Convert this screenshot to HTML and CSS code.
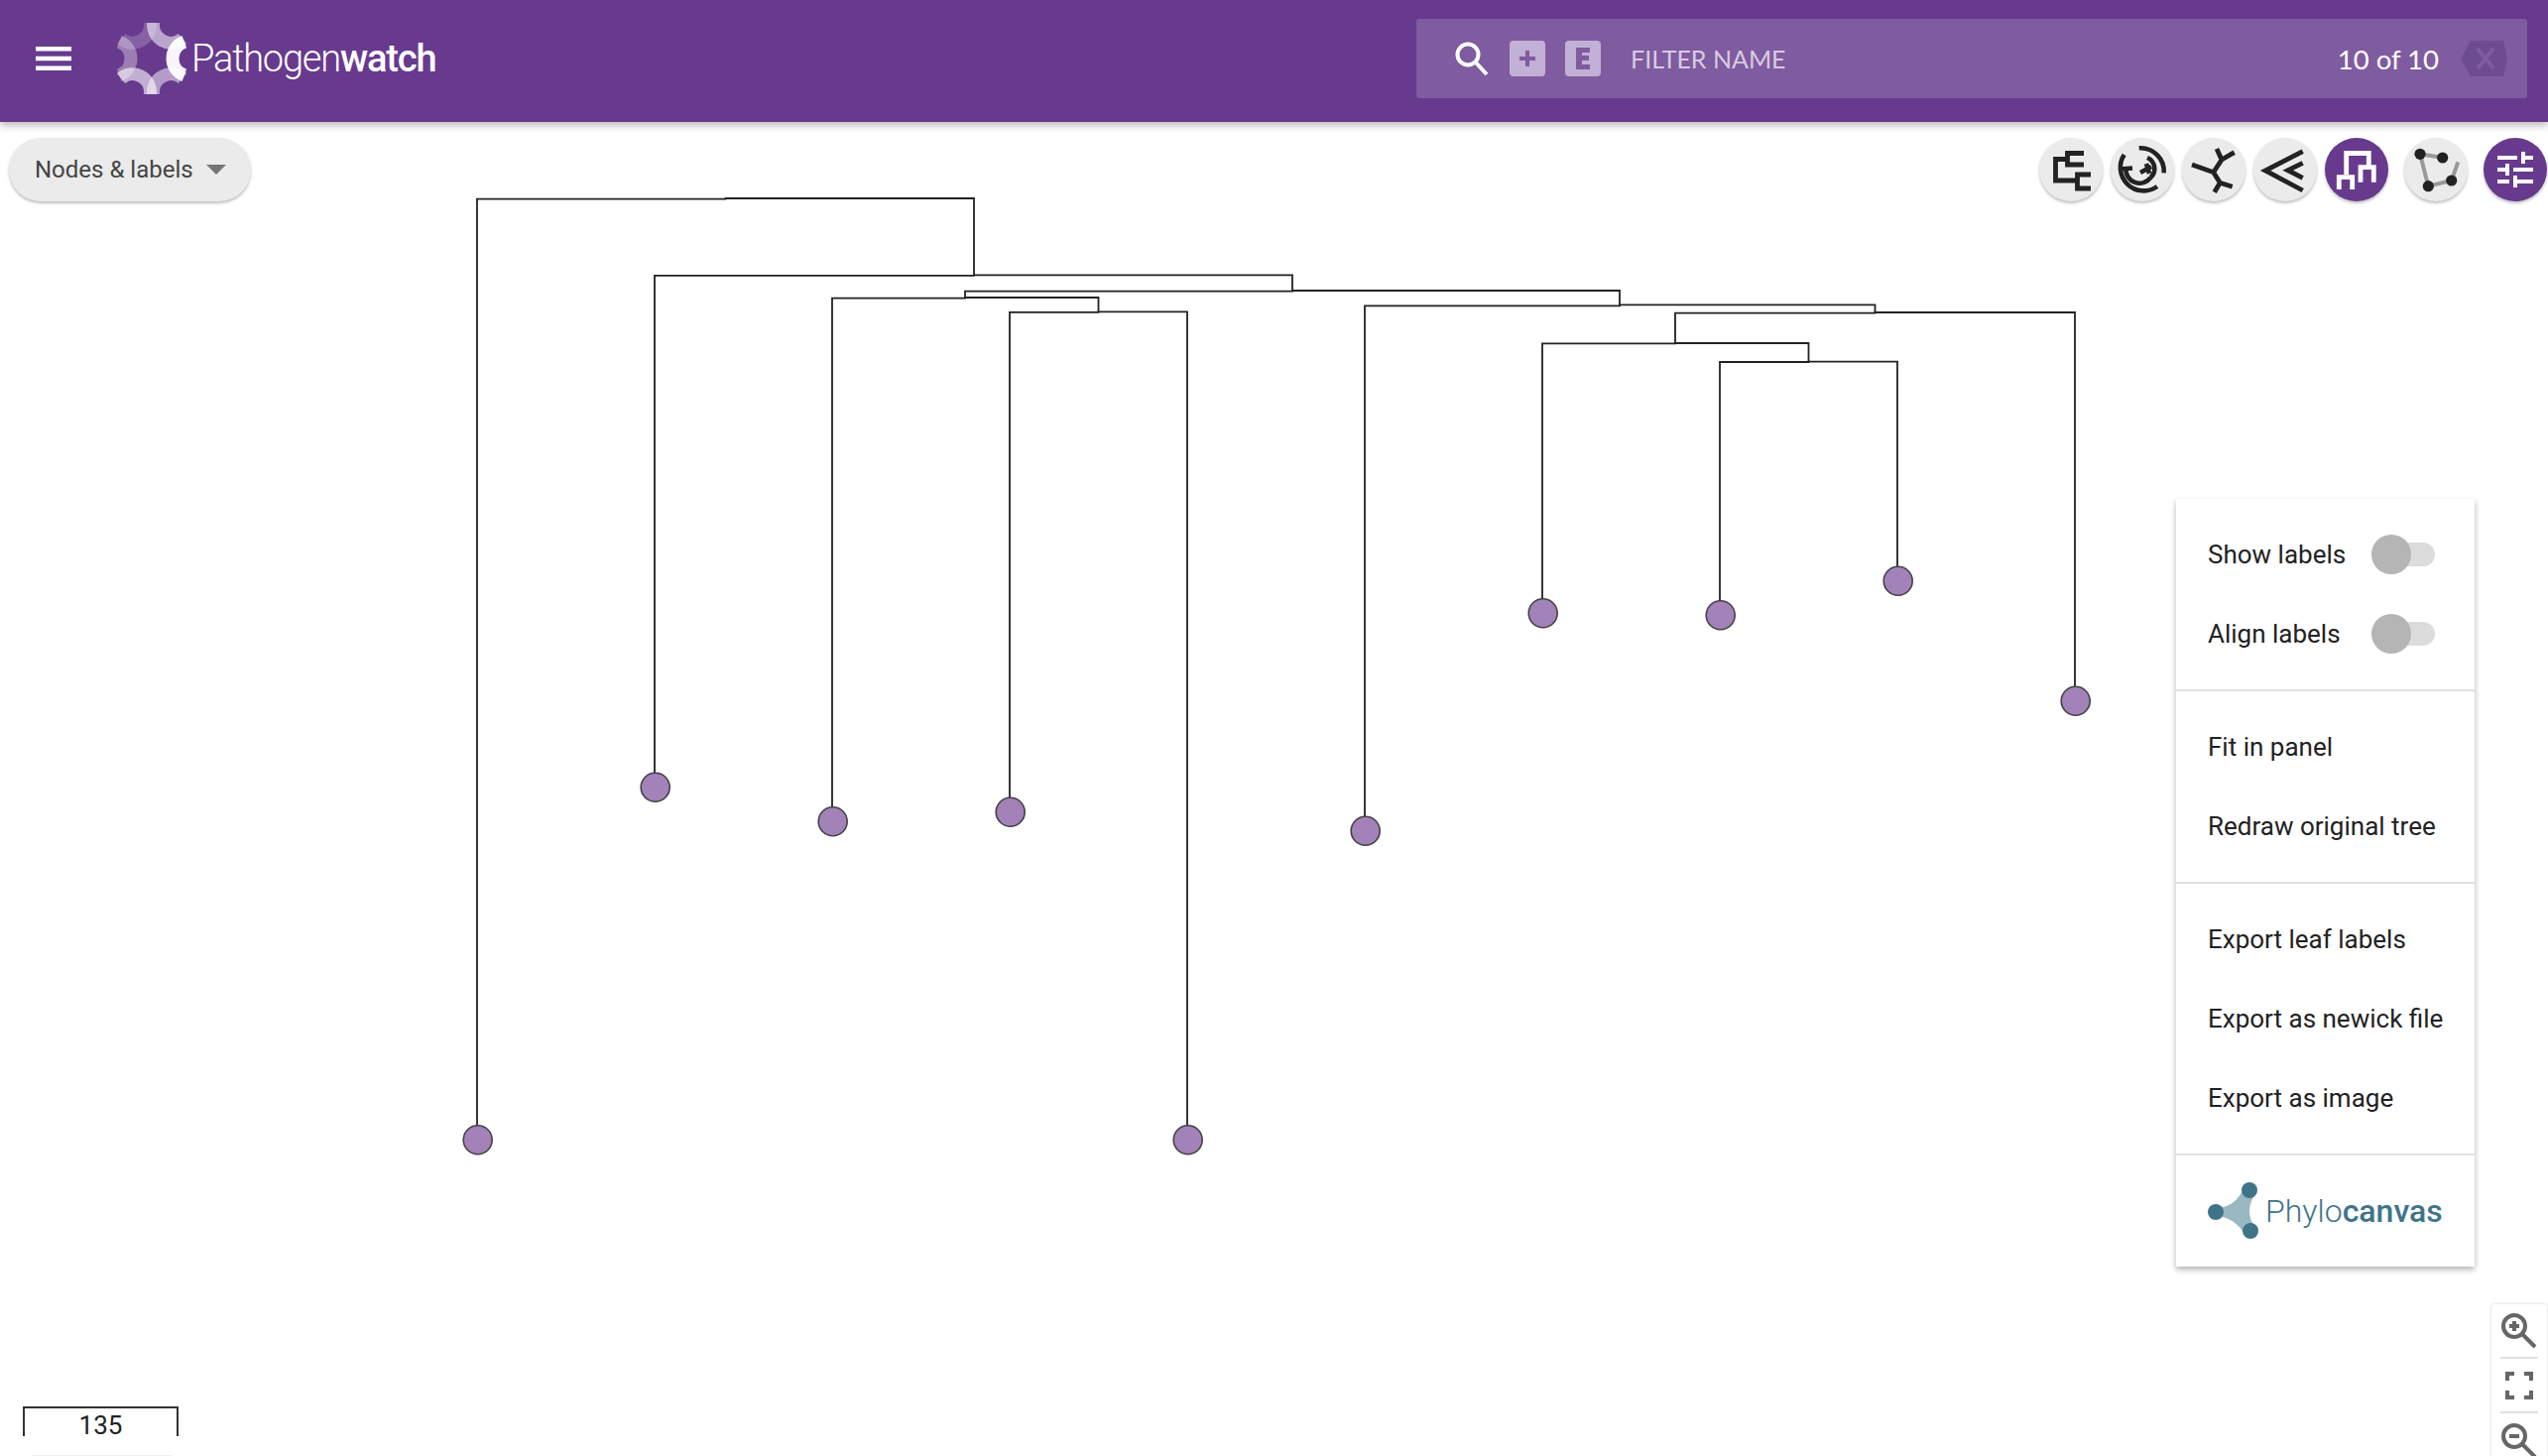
FILE: index.html
```html
<!DOCTYPE html>
<html lang="en">
<head>
  <meta charset="UTF-8">
  <title>Pathogenwatch</title>
  <link rel="stylesheet" href="styles.css">
</head>
<body>

  <header class="topbar">
    <button class="menu-btn" aria-label="Menu">
      <svg width="36" height="24" viewBox="0 0 36 24"><path d="M0 0h36v4.500H0zM0 9.700h36v4.500H0zM0 19.400h36v4.500H0z"/></svg>
    </button>
    <a class="brand">
      <svg class="brand-mark" width="70" height="72" viewBox="-35 -36 70 72">
        <path d="M32.8 -16.9A18 18 0 0 0 32.8 16.9" opacity="0.95"/>
        <path d="M32.8 -16.9A18 18 0 0 0 32.8 16.9" transform="rotate(60)" opacity="0.5"/>
        <path d="M32.8 -16.9A18 18 0 0 0 32.8 16.9" transform="rotate(120)" opacity="0.6"/>
        <path d="M32.8 -16.9A18 18 0 0 0 32.8 16.9" transform="rotate(180)" opacity="0.35"/>
        <path d="M32.8 -16.9A18 18 0 0 0 32.8 16.9" transform="rotate(240)" opacity="0.2"/>
        <path d="M32.8 -16.9A18 18 0 0 0 32.8 16.9" transform="rotate(300)" opacity="0.55"/>
      </svg>
      <span class="brand-name">Pathogen<b>watch</b></span>
    </a>
    <div class="filter">
      <svg class="filter-search" width="36" height="36" viewBox="0 0 36 36"><circle cx="14" cy="14" r="10.500"/><path d="M21.500 21.500L33 34"/></svg>
      <span class="key">
        <svg width="20" height="20" viewBox="0 0 20 20"><path d="M8 2h4v6h6v4h-6v6H8v-6H2V8h6z"/></svg>
      </span>
      <span class="key">
        <svg width="20" height="24" viewBox="0 0 20 24"><path d="M3 1h14v5H9v3h7v5H9v4h8v5H3z"/></svg>
      </span>
      <span class="filter-label">FILTER NAME</span>
      <span class="filter-count">10 of 10</span>
      <span class="filter-clear">
        <svg width="47" height="36" viewBox="0 0 47 36"><path class="hex" d="M10 0H43L47 18 43 36H10L0 18z"/><path class="cross" d="M17 8L33 28M33 8L17 28"/></svg>
      </span>
    </div>
  </header>

  <main class="stage">
    <svg class="tree" width="2569" height="1345" viewBox="0 123 2569 1345">
      <g class="branches">
        <path d="M481 1148V200.700H731.500V200H982V277.700"/>
        <path d="M660 793V277.800H982V277.300H1303V293.300"/>
        <path d="M973 300V293.700H1303V293H1633V308"/>
        <path d="M839 827V300.700H973V300H1107.500V314.700"/>
        <path d="M1018 818V314.800H1107.500V314.300H1197V1148"/>
        <path d="M1376 837V308.300H1633V307.400H1890.500V315.700"/>
        <path d="M1689 346V315.700H1890.500V315H2092V706"/>
        <path d="M1555 618V346.300H1689V346H1823.500V365"/>
        <path d="M1734 619V365H1823.500V364.700H1913V585"/>
      </g>
      <g class="leaves" transform="translate(0.7 0.8)">
        <circle cx="481" cy="1148.500" r="14.500"/>
        <circle cx="660" cy="793" r="14.500"/>
        <circle cx="839" cy="827.500" r="14.500"/>
        <circle cx="1018" cy="818" r="14.500"/>
        <circle cx="1197" cy="1148.500" r="14.500"/>
        <circle cx="1376" cy="837" r="14.500"/>
        <circle cx="1555" cy="617.500" r="14.500"/>
        <circle cx="1734" cy="619.500" r="14.500"/>
        <circle cx="1913" cy="585" r="14.500"/>
        <circle cx="2092" cy="706" r="14.500"/>
      </g>
    </svg>

    <button class="chip">Nodes &amp; labels <i class="caret"></i></button>

    <div class="tools">
      <button class="tool">
        <svg viewBox="0 0 64 64"><path d="M45 15.500H28.500V27H45M28.500 21.500H16.500V43H38.500M52 37H38.500V51H52"/></svg>
      </button>
      <button class="tool">
        <svg viewBox="0 0 64 64" class="radial"><path d="M28.700 10.300A23.500 23.500 0 0 1 53.700 35.300M13.700 17A23.500 23.500 0 0 0 47 49M15.500 31A13.700 13.700 0 0 0 40.300 40M37 20A12 12 0 0 1 40.300 40M10 31.500L22 30.500M30 35L41 29M36 26L39 36"/></svg>
      </button>
      <button class="tool">
        <svg viewBox="0 0 64 64"><path d="M10 27L31.700 34.700L40 22L35 11M40 22L52.700 14.700M31.700 34.700L38.300 45.300L32.700 54.700M38.300 45.300L50.700 49.300"/></svg>
      </button>
      <button class="tool">
        <svg viewBox="0 0 64 64"><path d="M49.700 13.700L12 33L49.700 53M49.700 25.300L34.700 32.700L49.700 40.300"/></svg>
      </button>
      <button class="tool is-on">
        <svg viewBox="0 0 64 64"><path d="M21.700 37V15.500H44.300V29.700M14.300 52V39.700H27.700V52M36 44.700V29.700H49.300V44.700"/></svg>
      </button>
      <button class="tool tool-gap">
        <svg viewBox="0 0 64 64"><path class="edge" d="M16 16.300L38.700 20M16 16.300L24.300 48.700L47.700 43L54.300 24.300"/><circle cx="16" cy="16.300" r="5.600"/><circle cx="38.700" cy="20" r="5.600"/><circle cx="24.300" cy="48.700" r="5.600"/><circle cx="47.700" cy="43" r="5.600"/></svg>
      </button>
      <button class="tool is-on tool-gap">
        <svg viewBox="0 0 24 24" class="tune"><path d="M3 17v2h6v-2H3zM3 5v2h10V5H3zm10 16v-2h8v-2h-8v-2h-2v6h2zM7 9v2H3v2h4v2h2V9H7zm14 4v-2H11v2h10zm-6-4h2V7h4V5h-4V3h-2v6z"/></svg>
      </button>
    </div>

    <aside class="panel">
      <section class="panel-group">
        <div class="panel-row">Show labels <span class="toggle"></span></div>
        <div class="panel-row">Align labels <span class="toggle"></span></div>
      </section>
      <section class="panel-group">
        <div class="panel-row">Fit in panel</div>
        <div class="panel-row">Redraw original tree</div>
      </section>
      <section class="panel-group">
        <div class="panel-row">Export leaf labels</div>
        <div class="panel-row">Export as newick file</div>
        <div class="panel-row">Export as image</div>
      </section>
      <div class="panel-logo">
        <svg width="56" height="58" viewBox="0 0 56 58">
          <path class="logo-arm" d="M8 26C20 26 30 20 36 6L48 12C40 22 40 38 49 46L38 54C32 42 20 34 8 34z"/>
          <circle cx="8" cy="30" r="8"/><circle cx="42" cy="8" r="8"/><circle cx="43" cy="49" r="8"/>
        </svg>
        <span class="logo-name">Phylo<b>canvas</b></span>
      </div>
    </aside>

    <div class="zoom">
      <button class="zoom-btn">
        <svg width="40" height="40" viewBox="0 0 40 40"><circle cx="15" cy="15" r="11"/><path d="M23 23L36 36M10 15H20M15 10V20"/></svg>
      </button>
      <button class="zoom-btn">
        <svg width="30" height="30" viewBox="0 0 30 30" class="full"><path d="M1 10V1H10V5H5V10zM20 1H29V10H25V5H20zM1 20H5V25H10V29H1zM25 20H29V29H20V25H25z"/></svg>
      </button>
      <button class="zoom-btn">
        <svg width="40" height="40" viewBox="0 0 40 40"><circle cx="15" cy="15" r="11"/><path d="M23 23L36 36M10 15H20"/></svg>
      </button>
    </div>

    <div class="scale"><span>135</span></div>
  </main>

</body>
</html>
```

FILE: styles.css
```css
* {
  box-sizing: border-box;
}

html, body {
  margin: 0;
  height: 100%;
  overflow: hidden;
}

body {
  font-family: "Roboto", sans-serif;
  background: #fff;
  color: #222;
}

button {
  font: inherit;
  border: none;
  padding: 0;
  background: none;
}

/* top bar */
.topbar {
  position: relative;
  z-index: 2;
  display: flex;
  align-items: center;
  height: 123px;
  padding-bottom: 5px;
  background: #673a8e;
  box-shadow: 0 3px 8px rgba(0, 0, 0, 0.3);
}

.menu-btn {
  display: flex;
  margin-left: 36px;
  fill: #fff;
}

.brand {
  display: flex;
  align-items: center;
  gap: 5px;
  margin-left: 46px;
  color: #fff;
}

.brand-mark {
  fill: none;
  stroke: #fff;
  stroke-width: 13;
}

.brand-name {
  font-size: 38px;
  font-weight: 300;
  letter-spacing: -1.2px;
}

.brand-name b {
  font-weight: 500;
}

.filter {
  display: flex;
  align-items: center;
  width: 1120px;
  height: 80px;
  margin-left: auto;
  margin-right: 21px;
  padding: 0 20px 0 38px;
  background: #7f5ba0;
  border-radius: 3px;
  color: #fff;
}

.filter-search {
  fill: none;
  stroke: #fff;
  stroke-width: 4;
}

.key {
  display: flex;
  align-items: center;
  justify-content: center;
  width: 36px;
  height: 36px;
  margin-left: 20px;
  background: #c2b0d6;
  border-radius: 4px;
  fill: #7f5ba0;
}

.filter-label {
  margin-left: 30px;
  font-family: "Lato", sans-serif;
  font-size: 25px;
  color: rgba(255, 255, 255, 0.7);
}

.filter-count {
  margin-left: auto;
  font-family: "Lato", sans-serif;
  font-size: 27.5px;
}

.filter-clear {
  display: flex;
  margin-left: 22px;
}

.filter-clear .hex {
  fill: #6e4c92;
}

.filter-clear .cross {
  fill: none;
  stroke: #7f5ba0;
  stroke-width: 4;
}

/* tree canvas */
.stage {
  position: relative;
  height: 1345px;
  overflow: hidden;
}

.tree {
  position: absolute;
  inset: 0;
}

.branches path {
  fill: none;
  stroke: #222;
  stroke-width: 1.8;
}

.leaves circle {
  fill: #a381b9;
  stroke: #444;
  stroke-width: 1.6;
}

.chip {
  position: absolute;
  top: 16px;
  left: 9px;
  display: flex;
  align-items: center;
  gap: 13px;
  height: 64px;
  padding: 0 25px 0 26px;
  border-radius: 32px;
  background: #ebebeb;
  box-shadow: 0 2px 3px rgba(0, 0, 0, 0.25);
  color: #444;
  font-size: 24px;
}

.caret {
  width: 0;
  height: 0;
  border-left: 10px solid transparent;
  border-right: 10px solid transparent;
  border-top: 10px solid #757575;
}

.tools {
  position: absolute;
  top: 16px;
  right: 1px;
  display: flex;
  gap: 8px;
}

.tool {
  width: 64px;
  height: 64px;
  border-radius: 50%;
  background: #ebebeb;
  box-shadow: 0 2px 3px rgba(0, 0, 0, 0.25);
}

.tool-gap {
  margin-left: 8px;
}

.tool svg {
  display: block;
  fill: none;
  stroke: #222;
  stroke-width: 4.8;
}

.tool .radial {
  stroke-width: 4.6;
}

.tool .edge {
  stroke: #999;
  stroke-width: 4;
}

.tool circle {
  fill: #222;
  stroke: none;
}

.tool.is-on {
  background: #673a8e;
}

.tool.is-on svg {
  stroke: #fff;
}

.tool.is-on .tune {
  width: 48px;
  height: 48px;
  margin: 8px;
  fill: #fff;
  stroke: none;
}

/* side panel */
.panel {
  position: absolute;
  top: 380px;
  left: 2194px;
  width: 301px;
  background: #fff;
  box-shadow: 0 3px 6px rgba(0, 0, 0, 0.3);
}

.panel-group {
  padding: 16px 0;
  border-bottom: 2px solid #e0e0e0;
}

.panel-row {
  display: flex;
  align-items: center;
  justify-content: space-between;
  height: 80px;
  padding: 0 40px 0 32px;
  font-size: 26px;
  color: #222;
  white-space: nowrap;
}

.toggle {
  position: relative;
  display: block;
  width: 64px;
  height: 24px;
  border-radius: 12px;
  background: #dcdcdc;
}

.toggle::before {
  content: '';
  position: absolute;
  top: -8px;
  left: 0;
  width: 40px;
  height: 40px;
  border-radius: 50%;
  background: #b5b5b5;
}

.panel-logo {
  display: flex;
  align-items: center;
  height: 112px;
  padding-left: 32px;
  gap: 2px;
  color: #3f7488;
}

.panel-logo svg {
  fill: #3f7488;
}

.logo-arm {
  fill: #9ab8c1;
}

.logo-name {
  font-size: 32px;
  font-weight: 300;
}

.logo-name b {
  font-weight: 500;
}

/* zoom controls */
.zoom {
  position: absolute;
  top: 1192px;
  left: 2512px;
  width: 56px;
  padding: 0 9px;
  background: #fff;
  border-radius: 3px;
  box-shadow: 0 0 3px rgba(0, 0, 0, 0.2);
}

.zoom-btn {
  display: flex;
  align-items: center;
  justify-content: center;
  width: 100%;
  height: 55px;
  border-bottom: 2px solid #e0e0e0;
}

.zoom-btn:last-child {
  border-bottom: none;
}

.zoom-btn svg {
  flex: none;
  fill: none;
  stroke: #666;
  stroke-width: 4;
}

.zoom-btn .full {
  fill: #666;
  stroke: none;
}

.scale {
  position: absolute;
  top: 1295px;
  left: 23px;
  width: 157px;
  height: 30px;
  padding-top: 4px;
  border: solid #333;
  border-width: 2px 2px 0;
  text-align: center;
  font-size: 26px;
  line-height: 26px;
  color: #222;
}

.scale::after {
  content: '';
  position: absolute;
  top: 47px;
  left: 7px;
  right: 5px;
  height: 1px;
  background: #eee;
}
```
